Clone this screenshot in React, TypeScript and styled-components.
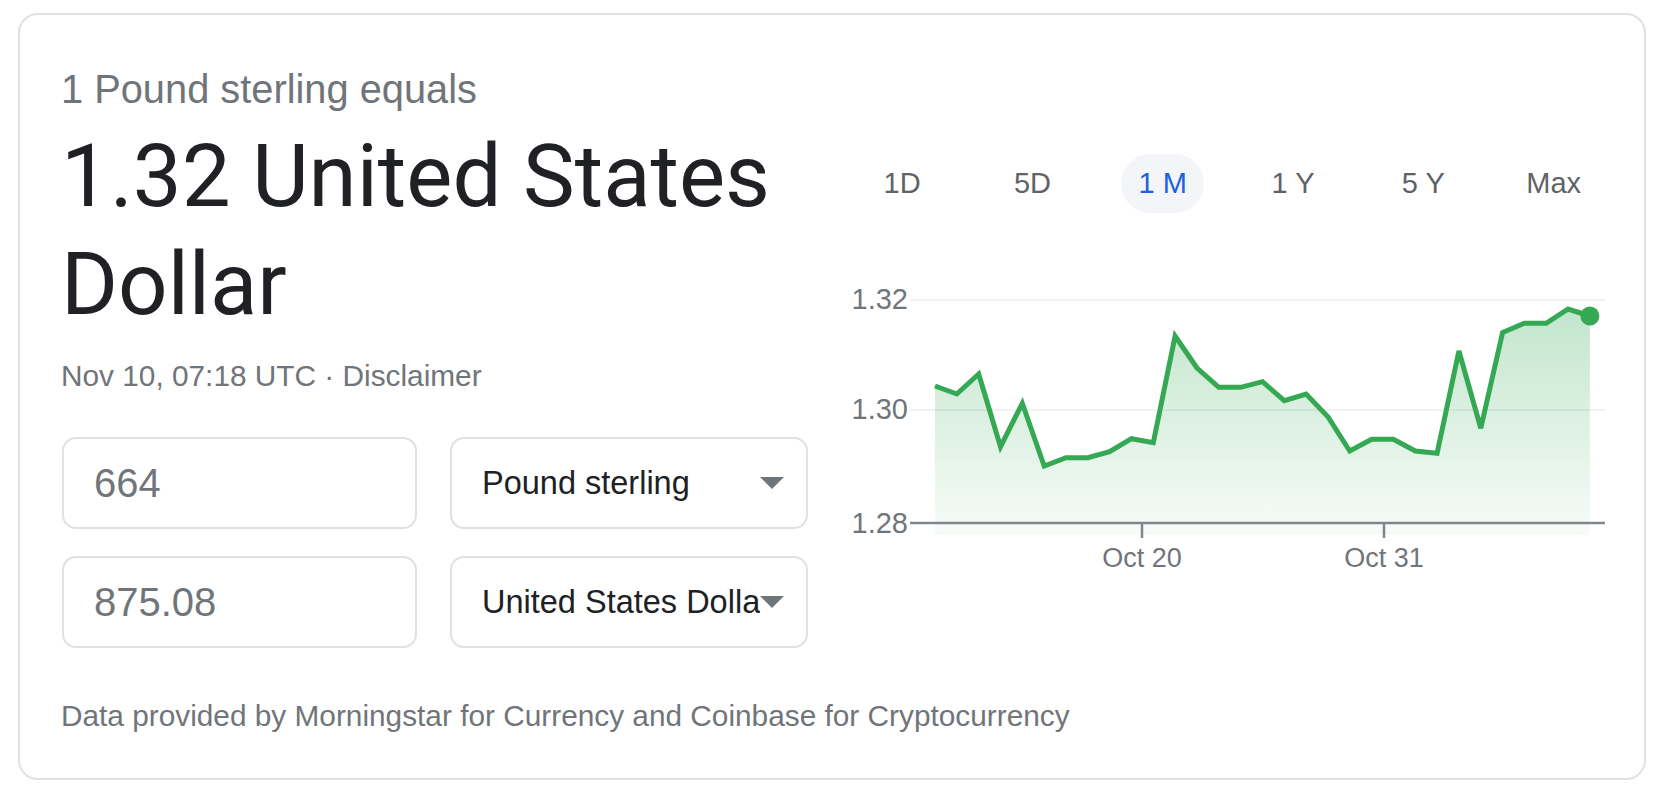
import * as React from 'react';
import styled, { createGlobalStyle } from 'styled-components';

const GlobalStyle = createGlobalStyle`
    html, body {
        margin: 0;
        padding: 0;
        background: #ffffff;
    }
    * {
        box-sizing: border-box;
    }
`;

const Card = styled.div`
    margin: 13px 19px 0 18px;
    height: 767px;
    border: 2px solid #dfe1e5;
    border-radius: 20px;
    padding: 50px 24px 0 41px;
    font-family: "Liberation Sans", Arial, sans-serif;
    background: #fff;
`;

const Top = styled.div`
    display: flex;
`;

const LeftCol = styled.div`
    width: 748px;
    flex-shrink: 0;
`;

const RightCol = styled.div`
    flex: 1;
    padding-top: 89px;
`;

const Subtitle = styled.div`
    font-size: 39.8px;
    line-height: 48px;
    color: #70757a;
`;

const Heading = styled.div`
    margin-top: 9px;
    font-family: Roboto, "Liberation Sans", sans-serif;
    font-size: 87px;
    line-height: 108px;
    color: #202124;
`;

const DateLine = styled.div`
    margin-top: 20px;
    font-size: 29.8px;
    line-height: 36px;
    color: #70757a;
`;

const Converter = styled.div`
    margin-top: 43px;
    margin-left: 1px;
    display: grid;
    grid-template-columns: 355px 358px;
    grid-auto-rows: 92px;
    column-gap: 33px;
    row-gap: 27px;
`;

const Box = styled.div`
    border: 2px solid #dfe1e5;
    border-radius: 14px;
    display: flex;
    align-items: center;
    padding-left: 30px;
    overflow: hidden;
`;

const Amount = styled.span`
    font-size: 40px;
    color: #70757a;
`;

const SelectBox = styled(Box)`
    padding-right: 22px;
`;

const SelectLabel = styled.span`
    flex: 1;
    min-width: 0;
    overflow: hidden;
    white-space: nowrap;
    font-size: 32.5px;
    color: #202124;
`;

const Caret = styled.span`
    flex-shrink: 0;
    width: 0;
    height: 0;
    border-left: 12px solid transparent;
    border-right: 12px solid transparent;
    border-top: 12px solid #70757a;
`;

const Footer = styled.div`
    margin-top: 50px;
    font-size: 29.8px;
    line-height: 36px;
    color: #70757a;
`;

const Tabs = styled.div`
    margin-left: 28px;
    display: grid;
    grid-template-columns: repeat(6, 130.3px);
`;

const Tab = styled.div<{ $active?: boolean }>`
    justify-self: center;
    width: 83px;
    height: 59px;
    border-radius: 30px;
    display: flex;
    align-items: center;
    justify-content: center;
    font-size: 29px;
    color: ${p => p.$active ? '#1a62e0' : '#5f6368'};
    background: ${p => p.$active ? '#f3f5f8' : 'transparent'};
`;

const ChartSvg = styled.svg`
    display: block;
    margin: 57px 0 0 31px;
    font-family: "Liberation Sans", Arial, sans-serif;
`;

const tabs = ['1D', '5D', '1 M', '1 Y', '5 Y', 'Max'];

const values = [386, 394, 374, 446.7, 403.3, 466, 457.7, 457.7, 451.7, 438.7, 442.7, 336, 368, 387.3, 387.3,
    381.7, 400.7, 394, 416.7, 451, 439.3, 439.3, 451, 453.3, 351, 428.3, 332.5, 323.3, 323.3, 309, 316];

const Chart: React.FC = () => {
    const pts = values.map((y, i) => [935 + i * 21.83, y]);
    const line = pts.map(p => p[0].toFixed(1) + ',' + p[1]).join(' ');
    const last = pts[pts.length - 1];
    const area = `935,535 ${line} ${last[0].toFixed(1)},535`;
    return (
        <ChartSvg width={780} height={310} viewBox="840 270 780 310">
            <defs>
                <linearGradient id="fillGrad" gradientUnits="userSpaceOnUse" x1="0" y1="305" x2="0" y2="535">
                    <stop offset="0" stopColor="#34a853" stopOpacity="0.3" />
                    <stop offset="1" stopColor="#34a853" stopOpacity="0.04" />
                </linearGradient>
            </defs>
            <line x1={910} y1={300} x2={1605} y2={300} stroke="#f1f1f1" strokeWidth={2} />
            <line x1={910} y1={410} x2={1605} y2={410} stroke="#f1f1f1" strokeWidth={2} />
            <polygon points={area} fill="url(#fillGrad)" />
            <line x1={910} y1={523} x2={1605} y2={523} stroke="#80868b" strokeWidth={2.5} />
            <line x1={1142} y1={523} x2={1142} y2={538} stroke="#80868b" strokeWidth={2.5} />
            <line x1={1384} y1={523} x2={1384} y2={538} stroke="#80868b" strokeWidth={2.5} />
            <polyline points={line} fill="none" stroke="#34a853" strokeWidth={5} strokeLinejoin="miter" />
            <circle cx={last[0]} cy={last[1]} r={9.5} fill="#34a853" />
            <g fontSize={29} fill="#70757a" textAnchor="end">
                <text x={908} y={309}>1.32</text>
                <text x={908} y={419}>1.30</text>
                <text x={908} y={532.5}>1.28</text>
            </g>
            <g fontSize={27} fill="#70757a" textAnchor="middle">
                <text x={1142} y={567}>Oct 20</text>
                <text x={1384} y={567}>Oct 31</text>
            </g>
        </ChartSvg>
    );
};

const App: React.FC = () => {
    return (
        <>
            <GlobalStyle />
            <Card>
                <Top>
                    <LeftCol>
                        <Subtitle>1 Pound sterling equals</Subtitle>
                        <Heading>1.32 United States Dollar</Heading>
                        <DateLine>Nov 10, 07:18 UTC · Disclaimer</DateLine>
                        <Converter>
                            <Box><Amount>664</Amount></Box>
                            <SelectBox>
                                <SelectLabel>Pound sterling</SelectLabel>
                                <Caret />
                            </SelectBox>
                            <Box><Amount>875.08</Amount></Box>
                            <SelectBox>
                                <SelectLabel>United States Dollar</SelectLabel>
                                <Caret />
                            </SelectBox>
                        </Converter>
                    </LeftCol>
                    <RightCol>
                        <Tabs>
                            {tabs.map(t => <Tab key={t} $active={t === '1 M'}>{t}</Tab>)}
                        </Tabs>
                        <Chart />
                    </RightCol>
                </Top>
                <Footer>Data provided by Morningstar for Currency and Coinbase for Cryptocurrency</Footer>
            </Card>
        </>
    );
};

export default App;
